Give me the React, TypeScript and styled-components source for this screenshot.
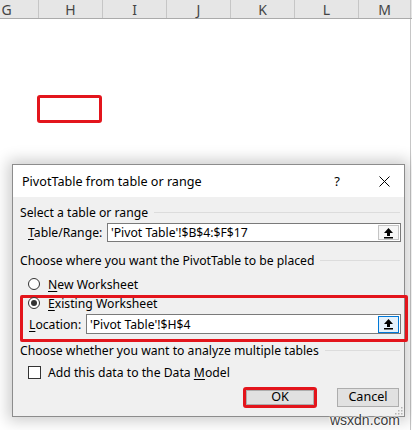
import React from "react";
import styled, { createGlobalStyle } from "styled-components";

const GlobalStyle = createGlobalStyle`
  html, body {
    margin: 0;
    padding: 0;
  }
  body {
    width: 412px;
    height: 430px;
    overflow: hidden;
    background: #fff;
    font-family: "Noto Sans", "Open Sans", sans-serif;
    color: #000;
  }
`;

const Sheet = styled.div`
  position: relative;
  width: 412px;
  height: 430px;
  overflow: hidden;
  display: flex;
  flex-direction: column;
`;

const ColumnBar = styled.div`
  display: flex;
  height: 18px;
  margin-left: -25px;
  background: #e6e6e6;
  border-bottom: 1px solid #ababab;
`;

const ColumnCell = styled.div<{ $w?: number }>`
  flex: 0 0 ${(p) => p.$w ?? 64}px;
  box-sizing: border-box;
  border-right: 1px solid #c6c6c6;
  display: flex;
  align-items: center;
  justify-content: center;
  font-size: 14px;
  color: #444;
`;

const GridBody = styled.div`
  position: relative;
  flex: 1;
  width: 411px;
  box-sizing: border-box;
  border-right: 1px solid #c6c6c6;
  background: #fff;
`;

const CellMarker = styled.div`
  position: absolute;
  left: 37px;
  top: 76px;
  width: 65px;
  height: 28px;
  box-sizing: border-box;
  border: 3px solid #e3151c;
  border-radius: 3px;
`;

const Dialog = styled.div`
  position: absolute;
  left: 12px;
  top: 145px;
  width: 393px;
  height: 253px;
  box-sizing: border-box;
  border: 1px solid #8c8c8c;
  box-shadow: 0 0 14px 4px rgba(0, 0, 0, 0.2);
  display: flex;
  flex-direction: column;
  font-size: 12.2px;
`;

const TitleBar = styled.div`
  height: 32px;
  flex: 0 0 32px;
  background: #fff;
  display: flex;
  align-items: center;
  padding-left: 9px;
`;

const Title = styled.span`
  flex: 1;
  font-size: 12.6px;
`;

const CaptionButton = styled.div`
  width: 40px;
  height: 32px;
  display: flex;
  align-items: center;
  justify-content: center;
  font-size: 13px;
  margin-left: 7px;
`;

const Body = styled.div`
  position: relative;
  flex: 1;
  background: #f0f0f0;
  padding: 8px 3px 0 7px;
  display: flex;
  flex-direction: column;
`;

const GroupHeader = styled.div<{ $top?: number }>`
  height: 15px;
  margin-top: ${(p) => p.$top ?? 0}px;
  display: flex;
  align-items: center;
  gap: 6px;
  padding-right: 1px;
  white-space: nowrap;
  &::after {
    content: "";
    flex: 1;
    height: 1px;
    background: #dcdcdc;
  }
`;

const FieldRow = styled.div<{ $top?: number; $indent?: number }>`
  display: flex;
  align-items: center;
  margin-top: ${(p) => p.$top ?? 0}px;
  padding-left: ${(p) => p.$indent ?? 8}px;
`;

const FieldLabel = styled.label<{ $w: number }>`
  flex: 0 0 ${(p) => p.$w}px;
  white-space: nowrap;
`;

const RefInput = styled.div<{ $h: number }>`
  flex: 1;
  height: ${(p) => p.$h}px;
  box-sizing: border-box;
  border: 1px solid #7a7a7a;
  background: #fff;
  display: flex;
  align-items: center;
  padding-left: 3px;
  padding-right: 1px;
`;

const RefText = styled.span`
  flex: 1;
  white-space: nowrap;
`;

const RefButton = styled.div<{ $focused?: boolean }>`
  width: 21px;
  height: ${(p) => (p.$focused ? 17 : 15)}px;
  box-sizing: border-box;
  border: 1px solid ${(p) => (p.$focused ? "#0078d7" : "#c4c4c4")};
  background: ${(p) => (p.$focused ? "#e5f1fb" : "#f6f6f6")};
  display: flex;
  align-items: center;
  justify-content: center;
`;

const OptionRow = styled.div<{ $top?: number; $h?: number; $indent?: number }>`
  display: flex;
  align-items: center;
  gap: 8px;
  height: ${(p) => p.$h ?? 16}px;
  margin-top: ${(p) => p.$top ?? 0}px;
  padding-left: ${(p) => p.$indent ?? 8}px;
  white-space: nowrap;
`;

const Radio = styled.span<{ $checked?: boolean }>`
  width: 12px;
  height: 12px;
  flex: 0 0 12px;
  box-sizing: border-box;
  border-radius: 50%;
  border: 1px solid #333;
  background: #fff;
  display: flex;
  align-items: center;
  justify-content: center;
  &::after {
    content: "";
    width: 6px;
    height: 6px;
    border-radius: 50%;
    background: ${(p) => (p.$checked ? "#333" : "transparent")};
  }
`;

const Checkbox = styled.span`
  width: 13px;
  height: 13px;
  flex: 0 0 13px;
  box-sizing: border-box;
  border: 1px solid #333;
  background: #fff;
  margin-right: -1px;
`;

const Highlight = styled.div`
  margin: 3px -7px 0 0;
  border: 3px solid #e3151c;
  border-radius: 2px;
  padding: 0 4px 5px 5px;
`;

const Key = styled.span`
  text-decoration: underline;
  text-underline-offset: 2px;
`;

const ButtonRow = styled.div`
  display: flex;
  justify-content: flex-end;
  align-items: center;
  gap: 20px;
  margin-top: 7px;
  padding-right: 2px;
`;

const OkFrame = styled.div`
  border: 3px solid #e3151c;
  border-radius: 3px;
  display: flex;
`;

const DialogButton = styled.button<{ $w: number; $h: number }>`
  width: ${(p) => p.$w}px;
  height: ${(p) => p.$h}px;
  box-sizing: border-box;
  padding: 0;
  border: 1px solid #adadad;
  background: #e1e1e1;
  display: flex;
  align-items: center;
  justify-content: center;
  line-height: 1;
  font-family: inherit;
  font-size: 12.6px;
  color: #000;
`;

const ResizeGrip = styled.svg`
  position: absolute;
  right: 1px;
  bottom: 1px;
`;

const Watermark = styled.span`
  position: absolute;
  right: 12px;
  bottom: 2px;
  font-family: "Liberation Sans", Arial, sans-serif;
  font-size: 14px;
  color: #3c3c3c;
  text-shadow: 0 0 2px #fff, 0 0 2px #fff, 0 0 2px #fff;
`;

const ArrowIcon = () => (
  <svg width="11" height="12" viewBox="0 0 11 12">
    <path d="M5.5 1 L10 6 H7 V9 H4 V6 H1 Z" fill="#000" />
    <rect x="1" y="10" width="9" height="1.5" fill="#000" />
  </svg>
);

const CloseIcon = () => (
  <svg width="11" height="11" viewBox="0 0 11 11">
    <path d="M0.5 0.5 L10.5 10.5 M10.5 0.5 L0.5 10.5" stroke="#000" strokeWidth="1" />
  </svg>
);

const columns = ["G", "H", "I", "J", "K", "L"];

export default function App() {
  return (
    <Sheet>
      <GlobalStyle />
      <ColumnBar>
        {columns.map((c) => (
          <ColumnCell key={c}>{c}</ColumnCell>
        ))}
        <ColumnCell $w={52}>M</ColumnCell>
      </ColumnBar>
      <GridBody>
        <CellMarker />
        <Dialog>
          <TitleBar>
            <Title>PivotTable from table or range</Title>
            <CaptionButton>?</CaptionButton>
            <CaptionButton>
              <CloseIcon />
            </CaptionButton>
          </TitleBar>
          <Body>
            <GroupHeader>Select a table or range</GroupHeader>
            <FieldRow $top={3}>
              <FieldLabel $w={79}>
                <Key>T</Key>able/Range:
              </FieldLabel>
              <RefInput $h={19}>
                <RefText>'Pivot Table'!$B$4:$F$17</RefText>
                <RefButton>
                  <ArrowIcon />
                </RefButton>
              </RefInput>
            </FieldRow>
            <GroupHeader $top={11}>Choose where you want the PivotTable to be placed</GroupHeader>
            <OptionRow $top={8}>
              <Radio />
              <span>
                <Key>N</Key>ew Worksheet
              </span>
            </OptionRow>
            <Highlight>
              <OptionRow $h={10} $indent={0}>
                <Radio $checked />
                <span>
                  <Key>E</Key>xisting Worksheet
                </span>
              </OptionRow>
              <FieldRow $top={6} $indent={1}>
                <FieldLabel $w={57}>
                  <Key>L</Key>ocation:
                </FieldLabel>
                <RefInput $h={20}>
                  <RefText>'Pivot Table'!$H$4</RefText>
                  <RefButton $focused>
                    <ArrowIcon />
                  </RefButton>
                </RefInput>
              </FieldRow>
            </Highlight>
            <GroupHeader $top={1}>Choose whether you want to analyze multiple tables</GroupHeader>
            <OptionRow $top={6}>
              <Checkbox />
              <span>
                Add this data to the Data <Key>M</Key>odel
              </span>
            </OptionRow>
            <ButtonRow>
              <OkFrame>
                <DialogButton $w={68} $h={15}>OK</DialogButton>
              </OkFrame>
              <DialogButton $w={62} $h={19}>Cancel</DialogButton>
            </ButtonRow>
            <ResizeGrip width="10" height="10" viewBox="0 0 10 10">
              {[
                [8, 2],
                [5, 5],
                [8, 5],
                [2, 8],
                [5, 8],
                [8, 8],
              ].map(([x, y]) => (
                <rect key={`${x}-${y}`} x={x} y={y} width="1.5" height="1.5" fill="#b4b4b4" />
              ))}
            </ResizeGrip>
          </Body>
        </Dialog>
      </GridBody>
      <Watermark>wsxdn.com</Watermark>
    </Sheet>
  );
}
